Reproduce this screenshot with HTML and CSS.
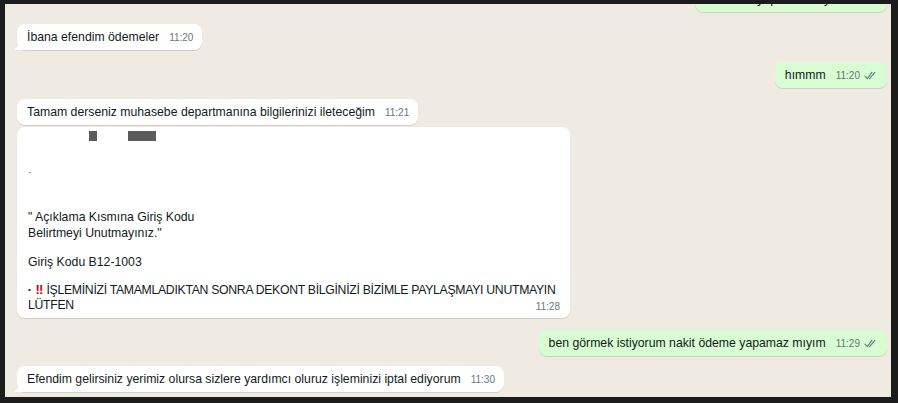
FILE: index.html
```html
<!DOCTYPE html>
<html lang="tr">
  <head>
    <meta charset="UTF-8" />
    <meta name="viewport" content="width=device-width, initial-scale=1.0" />
    <title>Sohbet</title>
    <link rel="stylesheet" href="styles.css">
  </head>

  <body>
    <div class="chat">
      <div class="msg out cut">
        <span class="text">yapamaz mıyım</span>
        <span class="time">11:20</span>
      </div>

      <div class="msg in tail first">
        <span class="text">İbana efendim ödemeler</span>
        <span class="time">11:20</span>
      </div>

      <div class="msg out hmm">
        <span class="text">hımmm</span>
        <span class="time">11:20</span>
        <svg class="ticks" width="14" height="9" viewBox="0 0 14 9">
          <path d="M1 5.2 L3.4 7.6 L7.8 1.4" />
          <path d="M5.6 7.6 L10.8 1.4" />
        </svg>
      </div>

      <div class="msg in tamam">
        <span class="text">Tamam derseniz muhasebe departmanına bilgilerinizi ileteceğim</span>
        <span class="time">11:21</span>
      </div>

      <div class="msg in big">
        <div class="hidden-row">
          <span class="blur small"></span>
          <span class="blur wide"></span>
        </div>
        <div class="dash"></div>
        <p class="line">" Açıklama Kısmına Giriş Kodu<br>Belirtmeyi Unutmayınız."</p>
        <p class="line">Giriş Kodu B12-1003</p>
        <p class="line warn"><span class="dot">•</span><span class="bang">‼</span> İŞLEMİNİZİ TAMAMLADIKTAN SONRA DEKONT BİLGİNİZİ BİZİMLE PAYLAŞMAYI UNUTMAYIN<br>LÜTFEN</p>
        <span class="time big-time">11:28</span>
      </div>

      <div class="msg out ben">
        <span class="text">ben görmek istiyorum nakit ödeme yapamaz mıyım</span>
        <span class="time">11:29</span>
        <svg class="ticks" width="14" height="9" viewBox="0 0 14 9">
          <path d="M1 5.2 L3.4 7.6 L7.8 1.4" />
          <path d="M5.6 7.6 L10.8 1.4" />
        </svg>
      </div>

      <div class="msg in tail last">
        <span class="text">Efendim gelirsiniz yerimiz olursa sizlere yardımcı oluruz işleminizi iptal ediyorum</span>
        <span class="time">11:30</span>
      </div>
    </div>
  </body>
</html>
```

FILE: styles.css
```css
body {
  margin: 0;
  background-color: #1c1c1c;
  font-family: "Liberation Sans", Arial, sans-serif;
}

.chat {
  margin: 4px 7px 6px 5px;
  height: 393px;
  background-color: #efeae2;
  overflow: hidden;
  display: flex;
  flex-direction: column;
  align-items: flex-start;
  padding: 0 4px 0 12px;
  box-sizing: border-box;
}

.msg {
  position: relative;
  display: flex;
  align-items: flex-end;
  border-radius: 8px;
  padding: 6px 9px 6px 10px;
  font-size: 12.25px;
  line-height: 14px;
  color: #111b21;
  white-space: nowrap;
  box-shadow: 0 1px 0.5px rgba(11, 20, 26, 0.13);
}

.in {
  background-color: #ffffff;
}

.out {
  background-color: #d9fdd3;
  align-self: flex-end;
}

.time {
  font-size: 10px;
  line-height: 12px;
  color: #667781;
  margin-left: 10px;
}

.ticks {
  margin-left: 4px;
  margin-bottom: 2px;
  fill: none;
  stroke: #667781;
  stroke-width: 1.1;
  stroke-linecap: round;
}

.tail::before {
  content: "";
  position: absolute;
  left: -3px;
  bottom: 0;
  width: 10px;
  height: 10px;
  background-color: #ffffff;
  clip-path: polygon(0 100%, 100% 0, 100% 100%);
}

.cut {
  margin-top: -18px;
  width: 192px;
  box-sizing: border-box;
  justify-content: flex-end;
}

.first {
  margin-top: 12px;
}

.hmm {
  margin-top: 12px;
}

.tamam {
  margin-top: 11px;
}

.big {
  margin-top: 2px;
  width: 553px;
  height: 191px;
  box-sizing: border-box;
  flex-direction: column;
  align-items: stretch;
  padding: 4px 10px 5px 11px;
}

.hidden-row {
  display: flex;
  height: 10px;
}

.blur {
  display: block;
  height: 10px;
  background-color: #5b5b5b;
  filter: blur(0.4px);
}

.small {
  width: 8px;
  margin-left: 61px;
}

.wide {
  width: 28px;
  margin-left: 31px;
}

.dash {
  width: 2px;
  height: 1px;
  background-color: #9a9a9a;
  margin: 31px 0 0 1px;
}

.line {
  margin: 0;
  line-height: 15.5px;
}

.line:nth-of-type(1) {
  margin-top: 37px;
}

.line:nth-of-type(2) {
  margin-top: 14px;
}

.line:nth-of-type(3) {
  margin-top: 11px;
}

.warn {
  letter-spacing: -0.3px;
}

.dot {
  font-size: 8px;
  margin-right: 5px;
  vertical-align: 2px;
}

.bang {
  color: #d0021b;
  font-weight: bold;
  font-size: 13px;
  letter-spacing: 0;
}

.big-time {
  align-self: flex-end;
  margin-top: -13px;
}

.ben {
  margin-top: 12px;
}

.last {
  margin-top: 10px;
}
```
